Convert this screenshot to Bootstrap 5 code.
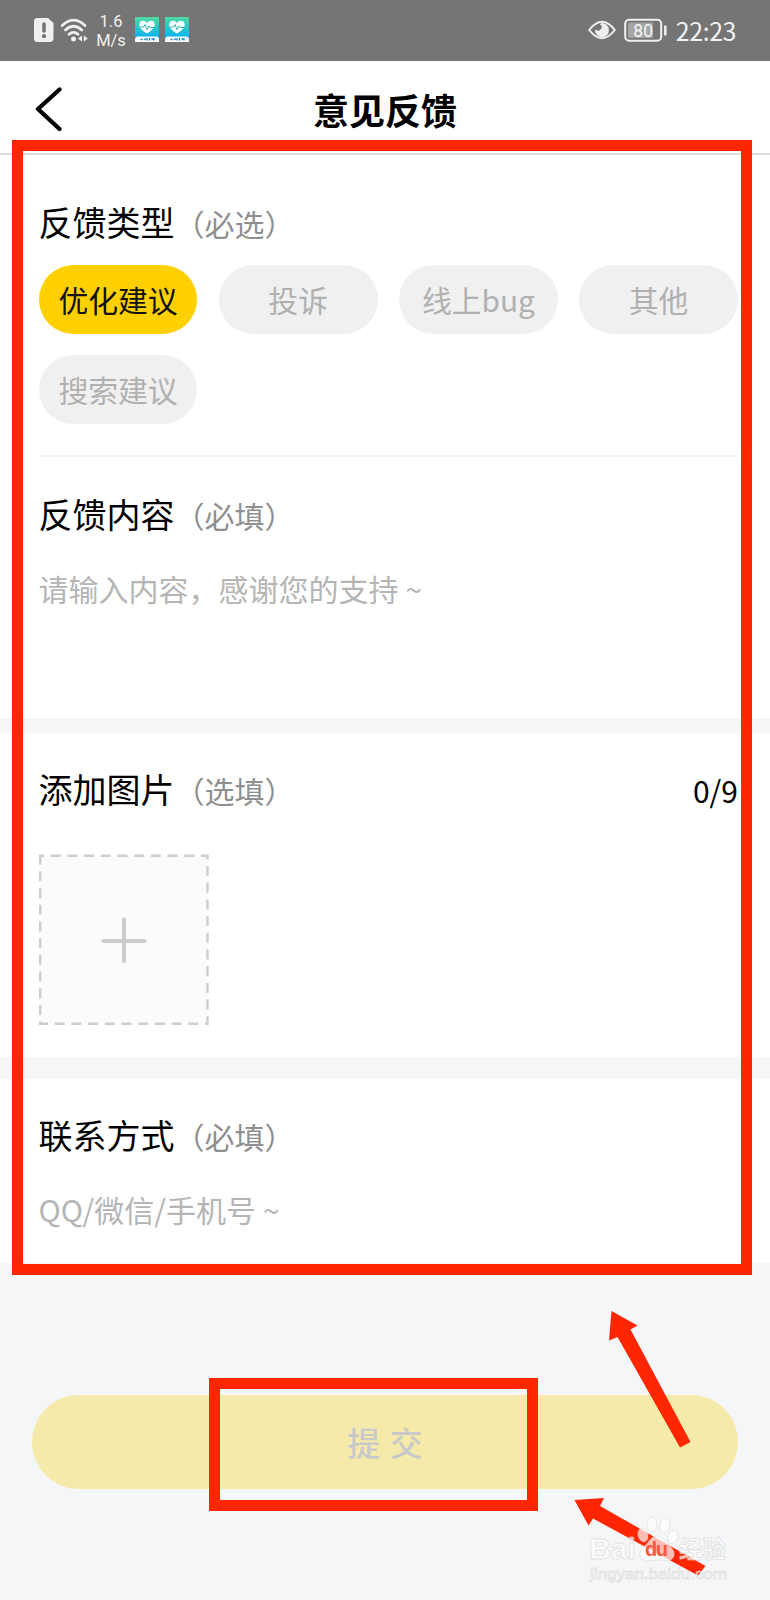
<!DOCTYPE html>
<html lang="zh-CN">
<head>
<meta charset="utf-8">
<meta name="viewport" content="width=device-width, initial-scale=1">
<title>意见反馈</title>
<link href="https://cdn.jsdelivr.net/npm/bootstrap@5.3.0/dist/css/bootstrap.min.css" rel="stylesheet">
<style>
body{font-family:"Noto Sans CJK SC",sans-serif;color:#000;background:#f4f6f8;height:1600px;overflow:hidden}
.statusbar{height:60.5px;background:#757575;color:#f0f0f0;font-family:Roboto,"Noto Sans CJK SC",sans-serif;padding:0 34px 0 33px}
.speed{font-size:16.5px;line-height:19px;width:30px;margin-left:6px;padding-top:2px}
.clock{font-family:"Noto Sans CJK SC",sans-serif;font-size:25px;line-height:30px;margin-left:8px;letter-spacing:-.45px}
.topbar{height:94.5px;border-bottom:2px solid #dcdcdc}
.topbar h1{font-size:36px;line-height:44px;font-weight:700;margin:2px 0 0}
.back-btn{left:34px;top:25px;line-height:0}
.panel{background:#fff;padding:0 32px 0 38.5px}
.ttl{font-size:34px;line-height:44px;height:44px;font-weight:400;margin:0;white-space:nowrap}
.ttl span{font-size:30px;color:#8f8f8f}
.chips{display:grid;grid-template-columns:repeat(4,1fr);gap:21.5px 21.2px;margin-top:21px}
.chip{height:68.5px;font-size:29.8px;line-height:1;background:#f0f0f0;color:#b0b0b0;padding:2px 0 0;border:0}
.chip.on{background:#ffd000;color:#111}
.hint{font-size:30px;line-height:44px;height:44px;color:#b5b5b5;white-space:nowrap}
.rule{height:2px;background:#f5f5f5;margin-top:31.5px}
.sec-type{height:302px;padding-top:45px}
.sec-body{height:261px;padding-top:35px}
.sec-pic{height:324px;margin-top:15px;padding-top:34px}
.sec-contact{height:183.5px;margin-top:22px;padding-top:34px}
.count{font-size:30px;line-height:46px;height:44px}
.submit{height:94.5px;margin:132px 32px 0;background:#f6eaab;color:#c9c9c9;font-size:33px;font-weight:500;border:0;padding:2px 0 0;line-height:1;word-spacing:2px}
.mark-frame{position:absolute;border:11px solid #ff2600;pointer-events:none}
.frame-form{left:12px;top:139.5px;width:739.5px;height:1135px}
.frame-submit{left:208.5px;top:1378px;width:329.5px;height:133px}
.overlay{position:absolute;left:560px;top:1300px}
</style>
</head>
<body class="position-relative">
<header class="statusbar d-flex align-items-center">
  <svg width="22" height="26" viewBox="0 0 22 26"><path d="M4 1h11l5.500 5v15a4 4 0 0 1-4 4H4.500a3.500 3.500 0 0 1-3.500-3.500V4.500A3.500 3.500 0 0 1 4 1z" fill="#f0f0f0"/><path d="M11 7v7" stroke="#757575" stroke-width="3.600" stroke-linecap="round"/><circle cx="11" cy="19.200" r="2.100" fill="#757575"/></svg>
  <svg class="ms-1" width="31" height="26" viewBox="0 0 31 26" fill="none" stroke="#f0f0f0" stroke-width="2.700" stroke-linecap="round"><path d="M3.200 8.500Q14.500-2.300 26 8.500M6.500 13Q14.500 5.500 22.700 13M10 17.300Q14.500 13.500 19 17.300"/><circle cx="14.500" cy="22" r="2.500" fill="#f0f0f0" stroke="none"/><path d="M23 18.500v6l-4-3zM24.800 18.500v6l4-3z" fill="#f0f0f0" stroke="none"/></svg>
  <div class="speed text-center">1.6<br>M/s</div>
  <svg style="margin-left:8px" width="56" height="26" viewBox="0 0 56 26">
    <defs><linearGradient id="teal" x2="0" y2="1"><stop stop-color="#50d9a0"/><stop offset=".8" stop-color="#08b4f0"/></linearGradient>
    <g id="health"><path d="M0 0h24v25H0z" fill="url(#teal)"/><path d="M12 16.500C7 13.500 4.200 10.500 4.200 7.700 4.200 3.500 9.500 2.500 12 6c2.500-3.500 7.700-2.500 7.700 1.700 0 2.800-2.700 5.800-7.700 8.800z" fill="#fff"/><path d="M5 10h3.500l1.500-2.500 2 5 2-3.500 1 1.500h4" fill="none" stroke="#25b7b5" stroke-width="1"/><path d="M0 25v-2q0-3.500 3-3.500h18q3 0 3 3.500v2z" fill="#fff"/><path d="M5.500 22.500h2M9 23l2-1.500M12 21v2.500M14.500 21v2.500M16.500 22h2M19 21v2.500" stroke="#2382c7" stroke-width="1.300"/></g></defs>
    <use href="#health" x="1"/><use href="#health" x="31"/>
  </svg>
  <svg class="ms-auto" width="28" height="20" viewBox="0 0 28 20"><path d="M1.200 10Q14-6.500 26.800 10 14 26.500 1.200 10z" fill="none" stroke="#f0f0f0" stroke-width="2"/><path d="M13 3.200a7 7 0 1 1-6 6.300q4 2.500 6-.500 2-3-1-4.500z" fill="#f0f0f0"/></svg>
  <svg style="margin-left:8px" width="44" height="26" viewBox="0 0 44 26"><rect x="1.200" y="2.700" width="36" height="21" rx="4" fill="none" stroke="#f0f0f0" stroke-width="2"/><rect x="4" y="5.500" width="25" height="15.500" rx="1.500" fill="#a5a5a5"/><path d="M41.300 8.500v10" stroke="#f0f0f0" stroke-width="2.500"/><text x="19.200" y="19.500" font-size="17.500" text-anchor="middle" fill="#f4f4f4">80</text></svg>
  <span class="clock">22:23</span>
</header>

<nav class="topbar bg-white position-relative d-flex justify-content-center align-items-start pt-4">
  <a href="#" class="back-btn position-absolute" aria-label="返回"><svg width="30" height="46" viewBox="0 0 30 46"><path d="M25.500 3.500 4 23l21.500 20" fill="none" stroke="#000" stroke-width="4.300" stroke-linecap="round" stroke-linejoin="round"/></svg></a>
  <h1>意见反馈</h1>
</nav>

<main>
  <section class="panel sec-type">
    <h2 class="ttl">反馈类型<span>（必选）</span></h2>
    <div class="chips">
      <button class="chip on rounded-pill">优化建议</button>
      <button class="chip rounded-pill">投诉</button>
      <button class="chip rounded-pill">线上bug</button>
      <button class="chip rounded-pill">其他</button>
      <button class="chip rounded-pill">搜索建议</button>
    </div>
    <div class="rule"></div>
  </section>

  <section class="panel sec-body">
    <h2 class="ttl">反馈内容<span>（必填）</span></h2>
    <div class="hint" style="margin-top:30px">请输入内容，感谢您的支持 ~</div>
  </section>

  <section class="panel sec-pic">
    <div class="d-flex justify-content-between">
      <h2 class="ttl">添加图片<span>（选填）</span></h2>
      <span class="count">0/9</span>
    </div>
    <svg class="d-block" style="margin:43px 0 0 -.7px" width="172" height="172" viewBox="0 0 172 172"><path d="M1.800 1.800h168v168h-168z" fill="#fbfbfb"/><path d="M1 1.800h168.500v168H2.200V1" fill="none" stroke="#cdcdcd" stroke-width="2.400" stroke-dasharray="10 6.700" stroke-dashoffset="5"/><path d="M86 65.500v41.500M65.200 87h41.500" stroke="#ccc" stroke-width="4" stroke-linecap="round"/></svg>
  </section>

  <section class="panel sec-contact">
    <h2 class="ttl">联系方式<span>（必填）</span></h2>
    <div class="hint" style="margin-top:30px">QQ/微信/手机号 ~</div>
  </section>

  <div class="d-grid"><button class="submit rounded-pill">提 交</button></div>
</main>

<div class="mark-frame frame-form"></div>
<div class="mark-frame frame-submit"></div>
<svg class="overlay" width="210" height="300" viewBox="560 1300 210 300">
  <g fill="#ff2600">
    <path d="M611.500 1311l26 14.500-7 4 60 112.500-10.500 5.500-62.500-110.500-8.500 3.500z"/>
    <path d="M574.500 1500l29.500-2-4 8 105.500 60-7.500 9.500-105-57-4.500 7z"/>
  </g>
  <g fill="#fff" fill-opacity=".7" stroke="#ccc" stroke-opacity=".55" stroke-width=".8" font-family="'Liberation Sans','Noto Sans CJK SC',sans-serif">
    <ellipse cx="652" cy="1524.500" rx="5" ry="7.500"/><ellipse cx="665" cy="1525.500" rx="5" ry="7.500" transform="rotate(12 665 1525)"/>
    <ellipse cx="643" cy="1535" rx="5" ry="7" transform="rotate(-15 643 1535)"/><ellipse cx="673" cy="1537" rx="5" ry="7" transform="rotate(20 673 1537)"/>
    <path d="M656.500 1536c6 0 8 6 13 10 7 5 6 14-2 15q-11-2-21 0c-8-1-9-9-2-15 5-4 6-10 12-10z"/>
    <text x="589" y="1559" font-size="30" font-weight="700" textLength="47" lengthAdjust="spacingAndGlyphs">Bai</text>
    <text x="679" y="1558" font-size="23.500" font-weight="700" font-family="'Noto Sans CJK SC',sans-serif">经验</text>
    <text x="590" y="1579" font-size="15.500" textLength="137" lengthAdjust="spacingAndGlyphs">jingyan.baidu.com</text>
  </g>
  <text x="645" y="1556" font-size="20" font-weight="700" font-family="'Liberation Sans',sans-serif" fill="#f9573f" textLength="23">du</text>
</svg>
<script src="https://cdn.jsdelivr.net/npm/bootstrap@5.3.0/dist/js/bootstrap.bundle.min.js"></script>
</body>
</html>
